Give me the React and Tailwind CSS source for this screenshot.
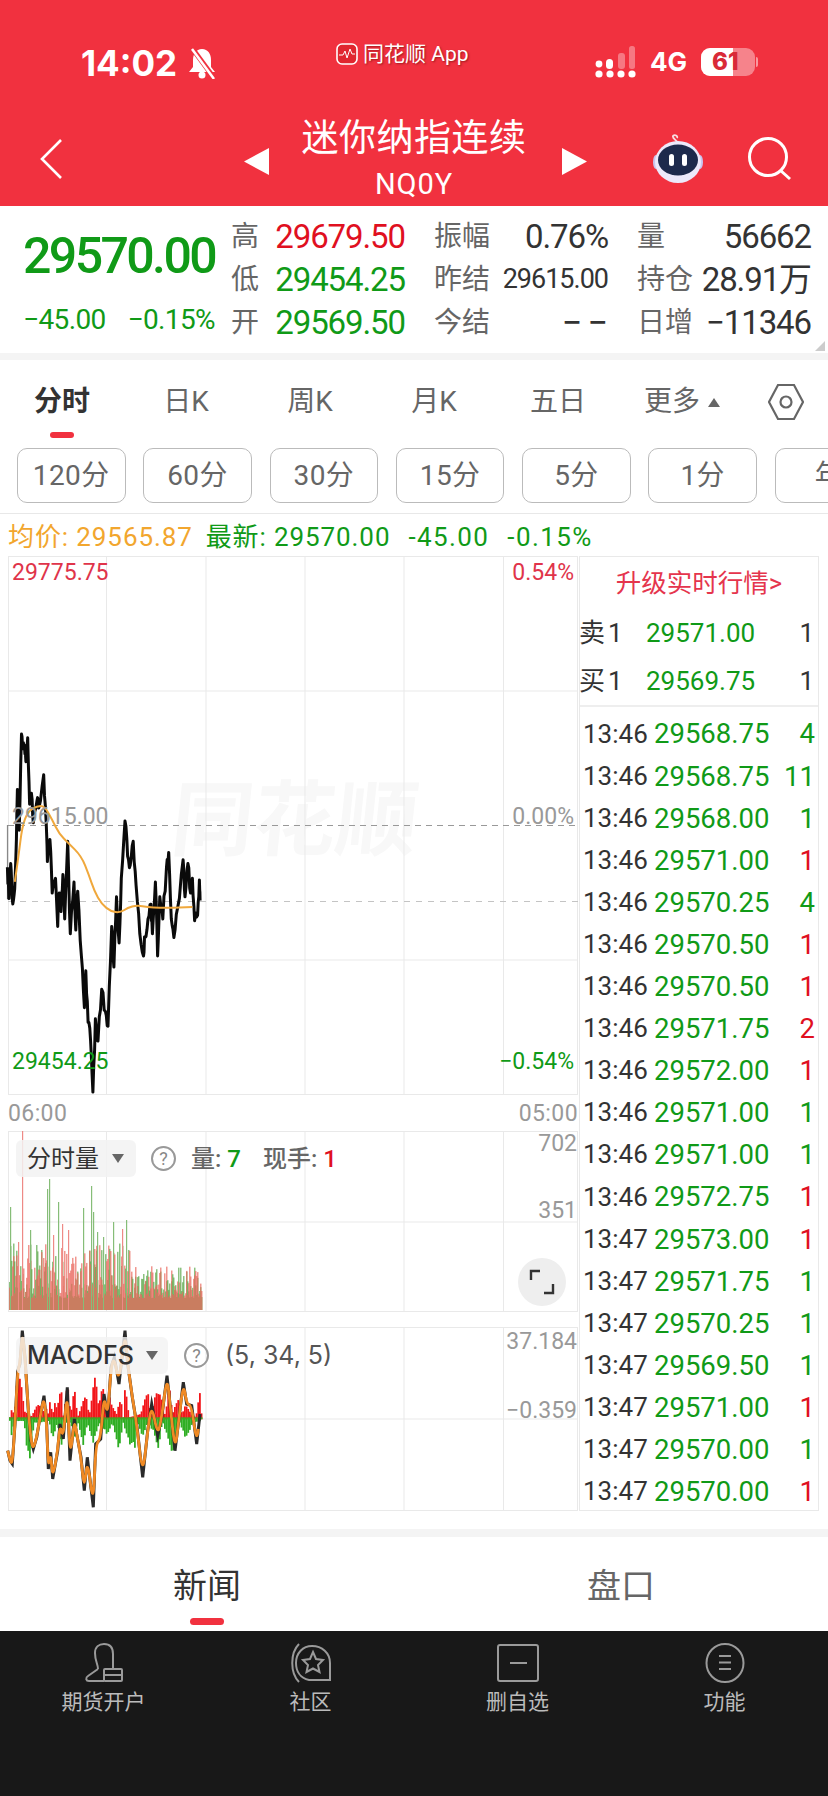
import React from 'react';

const GREEN = 'text-[#109a17]';
const RED = 'text-[#e0101f]';
const VX = [106.5, 206, 305, 404, 503.5];

// page px from zoomed trace coordinates
const mainTrace = [[20,860],[24,945],[29,850],[33,945],[38,935],[43,830],[47,650],[52,760],[58,500],[62,540],[66,530],[70,575],[75,510],[80,690],[85,660],[90,740],[100,680],[105,700],[118,610],[125,740],[128,845],[135,785],[141,930],[150,890],[156,1020],[160,930],[165,980],[170,880],[175,1000],[183,790],[190,1040],[200,900],[205,1030],[210,925],[220,1100],[228,1240],[232,1140],[238,1280],[245,1330],[251,1468],[258,1270],[265,1330],[275,1190],[285,1250],[292,1290],[302,1020],[308,1130],[315,940],[322,1065],[328,890],[338,735],[345,830],[352,855],[360,790],[368,910],[378,1040],[388,1100],[392,1050],[400,1000],[408,960],[412,1040],[420,900],[426,1100],[432,940],[440,1000],[450,860],[456,820],[463,1000],[470,1050],[480,970],[495,840],[500,940],[508,850],[515,930],[520,890],[526,1005],[534,990],[539,895],[541,950]];
const avgTrace = [[40,900],[50,830],[60,750],[75,710],[100,695],[120,695],[140,730],[160,770],[185,795],[220,830],[240,880],[255,925],[275,960],[300,980],[325,983],[345,970],[370,963],[400,968],[430,970],[470,970],[500,968],[540,968]];
const macdTrace = [[8,380],[15,410],[22,420],[30,300],[38,140],[45,120],[52,20],[60,100],[70,260],[78,350],[85,375],[95,340],[105,280],[117,215],[125,300],[130,435],[137,385],[143,465],[158,380],[165,300],[175,345],[187,190],[195,410],[208,285],[215,330],[228,400],[238,500],[247,400],[265,550],[272,360],[287,345],[297,210],[308,280],[318,130],[328,100],[342,180],[360,20],[368,120],[382,220],[395,300],[413,460],[428,320],[440,240],[458,335],[470,280],[486,155],[495,240],[510,380],[520,300],[535,175],[545,240],[560,245],[575,360],[585,270]];
const redEnv = [[12,280],[15,255],[25,270],[35,140],[45,170],[55,260],[75,280],[90,250],[100,235],[110,270],[118,225],[125,280],[133,230],[140,275],[147,240],[155,250],[165,180],[172,275],[185,180],[195,275],[205,190],[215,280],[240,210],[250,280],[268,145],[278,250],[290,180],[300,280],[310,210],[320,250],[332,270],[345,220],[352,280],[358,185],[370,280],[405,270],[425,200],[435,270],[450,210],[465,210],[478,275],[490,180],[500,270],[518,220],[528,270],[540,240],[555,270],[570,280],[582,205],[588,280]];
const greenEnv = [[12,285],[15,340],[25,285],[55,285],[60,345],[72,408],[85,290],[100,290],[130,285],[140,335],[155,290],[165,370],[175,290],[195,290],[205,340],[215,285],[232,355],[245,290],[262,350],[280,290],[305,325],[320,290],[340,370],[352,290],[370,350],[388,360],[395,290],[410,330],[425,290],[445,320],[458,370],[470,285],[500,385],[520,285],[540,340],[560,290],[585,285]];

const mainPts = mainTrace.map(([x, y]) => [x / 2.703, 550 + y / 2.703]);
const avgPts = avgTrace.map(([x, y]) => [x / 2.703, 550 + y / 2.703]);
const macdPts = macdTrace.map(([x, y]) => [5 + x / 3, 1325 + y / 3]);
const toStr = (pts) => pts.map((p) => p[0].toFixed(1) + ',' + p[1].toFixed(1)).join(' ');

const noise = (i) => {
  const s = Math.sin(i * 12.9898) * 43758.5453;
  return s - Math.floor(s);
};

// add small wiggles between traced points
function jag(pts, amp) {
  const out = [];
  pts.forEach((p, i) => {
    out.push(p);
    const n = pts[i + 1];
    if (!n) return;
    for (let k = 1; k < 3; k++) {
      const t = k / 3;
      out.push([p[0] + (n[0] - p[0]) * t, p[1] + (n[1] - p[1]) * t + (noise(i * 3 + k) - 0.5) * amp]);
    }
  });
  return out;
}

function smooth(pts) {
  let d = 'M' + pts[0][0] + ' ' + pts[0][1];
  for (let i = 1; i < pts.length - 1; i++) {
    const mx = (pts[i][0] + pts[i + 1][0]) / 2;
    const my = (pts[i][1] + pts[i + 1][1]) / 2;
    d += ' Q' + pts[i][0] + ' ' + pts[i][1] + ' ' + mx + ' ' + my;
  }
  return d;
}

function envAt(env, x) {
  for (let i = 0; i < env.length - 1; i++) {
    if (x >= env[i][0] && x <= env[i + 1][0]) {
      const t = (x - env[i][0]) / (env[i + 1][0] - env[i][0]);
      return env[i][1] + (env[i + 1][1] - env[i][1]) * t;
    }
  }
  return 280;
}

const spikes = { 22: [1132, 'r'], 49: [1180, 'g'], 47: [1190, 'g'], 58: [1203, 'g'], 91: [1187, 'g'], 83: [1209, 'g'], 93: [1213, 'g'], 10: [1208, 'g'], 113: [1223, 'g'], 126: [1221, 'g'], 30: [1231, 'g'], 62: [1225, 'r'], 68: [1231, 'r'], 122: [1230, 'r'], 53: [1236, 'r'], 18: [1243, 'r'], 97: [1233, 'g'], 103: [1238, 'g'] };

function VolumeBars() {
  const bars = [];
  for (let x = 9; x < 202; x++) {
    const env = x < 130 ? 55 : 32;
    const g = 12 + Math.pow(noise(x), 2) * env;
    const r = 12 + Math.pow(noise(x + 400), 2) * env;
    bars.push(<rect key={'g' + x} x={x} y={1311 - g} width="1.5" height={g} fill="#5ba84a" opacity="0.7" />);
    bars.push(<rect key={'r' + x} x={x} y={1311 - r} width="1.5" height={r} fill="#ea6a60" opacity="0.7" />);
    if (spikes[x]) {
      const [top, c] = spikes[x];
      bars.push(<rect key={'s' + x} x={x} y={top} width="1.2" height={1311 - top} fill={c === 'r' ? '#ee8a86' : '#86bd78'} />);
    }
  }
  return <g>{bars}</g>;
}

function MacdBars() {
  const bars = [];
  for (let zx = 12; zx < 588; zx += 5) {
    const x = 5 + zx / 3;
    const red = 280 - envAt(redEnv, zx);
    const grn = envAt(greenEnv, zx) - 280;
    const k = 0.88 + noise(zx) * 0.2;
    bars.push(<rect key={'r' + zx} x={x} y={1418.3 - (red * k) / 3} width="1.8" height={(red * k) / 3 + 2} fill="#f2161a" />);
    bars.push(<rect key={'g' + zx} x={x} y={1418.3} width="1.8" height={(grn * k) / 3 + 2} fill="#2fae24" />);
  }
  return <g>{bars}</g>;
}

function Grid({ x0 = 8, y0, w = 570, h, lines = [] }) {
  return (
    <g stroke="#e9e9e9" strokeWidth="1" fill="none">
      <rect x={x0 + 0.5} y={y0 + 0.5} width={w - 1} height={h - 1} />
      {VX.map((x) => <line key={x} x1={x} x2={x} y1={y0} y2={y0 + h} />)}
      {lines.map((y) => <line key={y} x1={x0} x2={x0 + w} y1={y} y2={y} />)}
    </g>
  );
}

function MainChart() {
  return (
    <div className="relative h-[539px]">
      <div className="absolute left-[164px] top-[225px] text-[82px] leading-[80px] font-bold text-[#f8f8f8] -skew-x-6">同花顺</div>
      <svg className="absolute inset-0 overflow-visible" width="570" height="539" viewBox="8 557 570 539">
        <Grid y0={557} h={539} lines={[692, 961]} />
        <line x1="8" x2="578" y1="826.5" y2="826.5" stroke="#999" strokeWidth="1.2" strokeDasharray="6 5" />
        <line x1="8" x2="578" y1="902.5" y2="902.5" stroke="#c4c4c4" strokeWidth="1" strokeDasharray="6 6" />
        <line x1="7.5" x2="7.5" y1="826" y2="900" stroke="#888" strokeWidth="1.2" />
        <polyline points={toStr(jag(mainPts, 14))} fill="none" stroke="#0a0a0a" strokeWidth="3" strokeLinejoin="round" />
        <path d={smooth(avgPts)} fill="none" stroke="#f0a83c" strokeWidth="2" />
      </svg>
      <span className="absolute left-[4px] top-[3px] text-[23px] leading-[28px] text-[#e0344a]">29775.75</span>
      <span className="absolute right-[4px] top-[3px] text-[23px] leading-[28px] text-[#e0344a]">0.54%</span>
      <span className="absolute left-[4px] top-[247px] text-[23px] leading-[28px] text-[#999]">29615.00</span>
      <span className="absolute right-[4px] top-[247px] text-[23px] leading-[28px] text-[#999]">0.00%</span>
      <span className="absolute left-[4px] top-[492px] text-[23px] leading-[28px] text-[#109a17]">29454.25</span>
      <span className="absolute right-[4px] top-[492px] text-[23px] leading-[28px] text-[#109a17]">−0.54%</span>
    </div>
  );
}

function HelpIcon() {
  return (
    <span className="flex h-[25px] w-[25px] items-center justify-center rounded-full border-2 border-[#999] text-[18px] leading-none text-[#888]">?</span>
  );
}

function VolumeChart() {
  return (
    <div className="relative h-[181px]">
      <svg className="absolute inset-0" width="570" height="181" viewBox="8 1132 570 181">
        <Grid y0={1132} h={181} lines={[1223]} />
        <VolumeBars />
      </svg>
      <div className="absolute left-[8px] top-[9px] flex items-center">
        <div className="flex h-[37px] w-[120px] items-center rounded-[6px] bg-[#f2f2f2]/85 pl-[11px] text-[24px] text-[#333]">
          分时量
          <svg className="ml-[13px]" width="12" height="9" viewBox="0 0 12 9"><path d="M0 0H12L6 9Z" fill="#666" /></svg>
        </div>
        <div className="ml-[15px]"><HelpIcon /></div>
        <span className="ml-[15px] text-[24px] font-medium text-[#666]">量: <span className={GREEN}>7</span></span>
        <span className="ml-[22px] text-[24px] font-medium text-[#666]">现手: <span className={RED}>1</span></span>
      </div>
      <span className="absolute right-[1px] top-[-1px] text-[23px] leading-[28px] text-[#999]">702</span>
      <span className="absolute right-[1px] top-[66px] text-[23px] leading-[28px] text-[#999]">351</span>
      <div className="absolute left-[510px] top-[127px] flex h-[48px] w-[48px] items-center justify-center rounded-full bg-[#eee]">
        <svg width="26" height="26" viewBox="0 0 26 26" fill="none" stroke="#333" strokeWidth="2.4"><path d="M2 11V2H11" /><path d="M24 15V24H15" /></svg>
      </div>
    </div>
  );
}

function MacdChart() {
  return (
    <div className="relative h-[184px]">
      <svg className="absolute inset-0 overflow-visible" width="570" height="184" viewBox="8 1328 570 184">
        <Grid y0={1328} h={184} lines={[1420]} />
        <MacdBars />
        <polyline points={toStr(macdPts)} fill="none" stroke="#2a2a2a" strokeWidth="3" strokeLinejoin="miter" strokeMiterlimit="6" />
        <path d={smooth(macdPts)} fill="none" stroke="#f08a24" strokeWidth="2.8" />
      </svg>
      <div className="absolute left-[8px] top-[10px] flex items-center">
        <div className="flex h-[37px] w-[152px] items-center rounded-[6px] bg-[#f2f2f2]/80 pl-[11px] font-['Inter',sans-serif] text-[25px] font-medium text-[#333]">
          MACDFS
          <svg className="ml-[12px]" width="12" height="9" viewBox="0 0 12 9"><path d="M0 0H12L6 9Z" fill="#666" /></svg>
        </div>
        <div className="ml-[16px]"><HelpIcon /></div>
        <span className="ml-[16px] font-['Inter',sans-serif] text-[25px] text-[#555]">(5, 34, 5)</span>
      </div>
      <span className="absolute right-[1px] top-[1px] text-[23px] leading-[28px] text-[#999]">37.184</span>
      <span className="absolute right-[1px] top-[70px] text-[23px] leading-[28px] text-[#999]">−0.359</span>
    </div>
  );
}

const trades = [
  ['13:46', '29568.75', '4', 'g'], ['13:46', '29568.75', '11', 'g'], ['13:46', '29568.00', '1', 'g'],
  ['13:46', '29571.00', '1', 'r'], ['13:46', '29570.25', '4', 'g'], ['13:46', '29570.50', '1', 'r'],
  ['13:46', '29570.50', '1', 'r'], ['13:46', '29571.75', '2', 'r'], ['13:46', '29572.00', '1', 'r'],
  ['13:46', '29571.00', '1', 'g'], ['13:46', '29571.00', '1', 'g'], ['13:46', '29572.75', '1', 'r'],
  ['13:47', '29573.00', '1', 'r'], ['13:47', '29571.75', '1', 'g'], ['13:47', '29570.25', '1', 'g'],
  ['13:47', '29569.50', '1', 'g'], ['13:47', '29571.00', '1', 'r'], ['13:47', '29570.00', '1', 'g'],
  ['13:47', '29570.00', '1', 'r'],
];

function SidePanel() {
  return (
    <div className="ml-px flex h-[955px] w-[240px] flex-col border border-[#e9e9e9]">
      <div className="flex h-[52px] shrink-0 items-center justify-center text-[25.5px] text-[#e5354d]">升级实时行情&gt;</div>
      {[['卖', '29571.00'], ['买', '29569.75']].map(([label, price]) => (
        <div key={label} className="flex h-[48px] shrink-0 items-center pr-[4px] text-[26px] text-[#333]">
          <span className="-ml-px w-[67px]">{label}<span className="ml-[3px]">1</span></span>
          <span className={'flex-1 ' + GREEN}>{price}</span>
          <span>1</span>
        </div>
      ))}
      <div className="h-[2px] shrink-0 bg-[#eee]" />
      <div className="flex flex-col pt-[6px]">
        {trades.map((t, i) => (
          <div key={i} className="grid h-[42.1px] grid-cols-[71px_114px_1fr] items-center pl-[3px] pr-[3px] text-[27.5px]">
            <span className="text-[26px] text-[#333]">{t[0]}</span>
            <span className={GREEN}>{t[1]}</span>
            <span className={'text-right ' + (t[3] === 'r' ? RED : GREEN)}>{t[2]}</span>
          </div>
        ))}
      </div>
    </div>
  );
}

function Quote({ label, value, className = '' }) {
  return (
    <div className="flex h-[43px] items-center justify-between">
      <span className="text-[28px] text-[#666]">{label}</span>
      <span className={className}>{value}</span>
    </div>
  );
}

function StatusBar() {
  return (
    <div className="flex h-[112px] items-start pl-[81px] pr-[70px] pt-[43px] text-white">
      <div className="flex w-[230px] items-center">
        <span className="font-['Inter',sans-serif] text-[35px] font-bold leading-[40px]">14:02</span>
        <svg className="ml-[10px]" width="30" height="32" viewBox="0 0 30 32">
          <path d="M15 2C9 2 6 7 6 13V20L2 25H28L24 20V13C24 7 21 2 15 2Z" fill="#fff" />
          <circle cx="15" cy="28" r="3.5" fill="#fff" />
          <line x1="5" y1="1" x2="27" y2="31" stroke="#f1313f" strokeWidth="5" />
          <line x1="5" y1="2" x2="27" y2="32" stroke="#fff" strokeWidth="2.5" />
        </svg>
      </div>
      <div className="mt-[-1px] ml-[25px] flex w-[136px] items-center">
        <svg width="22" height="22" viewBox="0 0 22 22" fill="none">
          <rect x="1" y="1" width="20" height="20" rx="5" stroke="#fff" strokeWidth="1.6" fill="#e0262f" />
          <path d="M3 12L7 12L9 8L11 15L14 6L16 11H19" stroke="#fff" strokeWidth="1" />
        </svg>
        <span className="ml-[5px] whitespace-nowrap text-[21px] leading-[24px] [text-shadow:1px_1px_2px_rgba(90,0,0,0.55)]">同花顺 App</span>
      </div>
      <div className="ml-auto mt-[3px] flex items-center">
        <svg width="42" height="32" viewBox="0 0 42 32" fill="#fff">
          <circle cx="4" cy="18" r="3.4" />
          <rect x="11" y="13" width="7" height="10" rx="3.5" />
          <rect x="23" y="7" width="7" height="16" rx="3" opacity="0.35" />
          <rect x="34" y="0" width="6" height="23" rx="2.5" opacity="0.35" />
          <circle cx="4" cy="28" r="3.6" />
          <circle cx="15" cy="28" r="3.6" />
          <circle cx="26" cy="28" r="3.6" />
          <circle cx="37" cy="28" r="3.6" />
        </svg>
        <span className="ml-[13px] font-['Inter',sans-serif] text-[26px] font-bold leading-[30px]">4G</span>
        <div className="relative ml-[14px] flex h-[28px] w-[54px] items-center overflow-hidden rounded-[9px] bg-white/40">
          <div className="h-full w-[32px] bg-white" />
          <span className="absolute left-[11px] top-0 font-['Inter',sans-serif] text-[24px] font-extrabold leading-[28px] text-[#d92a38]">61</span>
        </div>
        <div className="ml-[1px] h-[10px] w-[2px] rounded-r-full bg-white/50" />
      </div>
    </div>
  );
}

function TitleBar() {
  return (
    <div className="relative flex h-[94px] items-start justify-center text-white">
      <svg className="absolute left-[40px] top-[27px]" width="23" height="40" viewBox="0 0 23 40" fill="none">
        <path d="M21 1L2 20L21 39" stroke="#fff" strokeWidth="2.6" />
      </svg>
      <div className="ml-[3px] flex items-center">
        <svg className="mr-[32px] mt-[8px]" width="25" height="27" viewBox="0 0 25 27"><path d="M25 0V27L0 13.5Z" fill="#fff" /></svg>
        <div className="flex w-[226px] flex-col items-center pt-[3px]">
          <span className="whitespace-nowrap text-[37px] leading-[48px] tracking-[0.5px]">迷你纳指连续</span>
          <span className="mt-[3px] text-[29px] leading-[36px] tracking-[0.9px]">NQ0Y</span>
        </div>
        <svg className="ml-[35px] mt-[8px]" width="25" height="27" viewBox="0 0 25 27"><path d="M0 0V27L25 13.5Z" fill="#fff" /></svg>
      </div>
      <svg className="absolute left-[652px] top-[22px]" width="52" height="50" viewBox="0 0 52 50">
        <path d="M26 9C24 6 20 4 21 2C23 0 26 2 25 4" fill="none" stroke="#f7dce0" strokeWidth="1.8" />
        <ellipse cx="4" cy="28" rx="3" ry="7" fill="#c9c4ee" />
        <ellipse cx="48" cy="28" rx="3" ry="7" fill="#c9c4ee" />
        <ellipse cx="26" cy="28" rx="23" ry="21" fill="#ece9fb" />
        <ellipse cx="26" cy="26" rx="20" ry="15.5" fill="#1d2a4c" />
        <rect x="17" y="20" width="5" height="12" rx="2.5" fill="#fff" />
        <rect x="30" y="20" width="5" height="12" rx="2.5" fill="#fff" />
      </svg>
      <svg className="absolute left-[747px] top-[25px]" width="46" height="44" viewBox="0 0 46 44" fill="none" stroke="#fff" strokeWidth="3">
        <circle cx="21" cy="20" r="18.5" />
        <path d="M33 33L43 42" />
      </svg>
    </div>
  );
}

function QuoteBoard() {
  const big = 'text-[33px] leading-none tracking-[-1.1px]';
  return (
    <div className="relative flex h-[147px] bg-white">
      <div className="flex w-[231px] shrink-0 flex-col pl-[23px]">
        <span className={'mt-[22px] text-[50px] font-medium leading-[56px] tracking-[-2.6px] ' + GREEN}>29570.00</span>
        <div className={'mt-[19px] flex w-[192px] justify-between text-[28px] leading-[34px] tracking-[-0.6px] ' + GREEN}>
          <span>−45.00</span>
          <span>−0.15%</span>
        </div>
      </div>
      <div className="grid w-[580px] grid-cols-3 content-start gap-x-[29px] pt-[9px]">
        <Quote label="高" value="29679.50" className={big + ' ' + RED} />
        <Quote label="振幅" value="0.76%" className={big + ' text-[#333]'} />
        <Quote label="量" value="56662" className={big + ' text-[#333]'} />
        <Quote label="低" value="29454.25" className={big + ' ' + GREEN} />
        <Quote label="昨结" value="29615.00" className="text-[27px] leading-none tracking-[-1px] text-[#333]" />
        <Quote label="持仓" value="28.91万" className={big + ' text-[#333]'} />
        <Quote label="开" value="29569.50" className={big + ' ' + GREEN} />
        <Quote label="今结" value="−−" className="mr-[-5px] text-[36px] leading-none tracking-[5px] text-[#333]" />
        <Quote label="日增" value="−11346" className={big + ' text-[#333]'} />
      </div>
      <svg className="absolute right-[3px] bottom-[2px]" width="10" height="10" viewBox="0 0 10 10"><path d="M10 0V10H0Z" fill="#ccc" /></svg>
    </div>
  );
}

const tabs = ['分时', '日K', '周K', '月K', '五日'];
const periods = ['120分', '60分', '30分', '15分', '5分', '1分', '年'];

function PeriodTabs() {
  return (
    <div className="h-[154px] border-b border-[#e8e8e8]">
      <div className="flex h-[88px] pt-[22px]">
        {tabs.map((t, i) => (
          <div key={t} className="flex w-[124px] flex-col items-center">
            <span className={i === 0 ? 'text-[28px] font-semibold leading-[40px] text-[#333]' : 'text-[28px] leading-[40px] text-[#666]'}>{t}</span>
            {i === 0 && <div className="mt-[10px] h-[6px] w-[24px] rounded-full bg-[#f1313f]" />}
          </div>
        ))}
        <div className="flex w-[124px] items-start justify-center">
          <span className="text-[28px] leading-[40px] text-[#666]">更多</span>
          <svg className="ml-[8px] mt-[16px]" width="12" height="9" viewBox="0 0 12 9"><path d="M6 0L12 9H0Z" fill="#666" /></svg>
        </div>
        <div className="flex flex-1 justify-center">
          <svg width="36" height="40" viewBox="0 0 36 40" fill="none" stroke="#666" strokeWidth="2.2">
            <path d="M10 3H26L35 20L26 37H10L1 20Z" />
            <circle cx="18" cy="20" r="5.5" />
          </svg>
        </div>
      </div>
      <div className="flex gap-[17.8px] overflow-hidden pl-[17px]">
        {periods.map((p) => (
          <div key={p} className="flex h-[55px] w-[108.5px] shrink-0 items-center justify-center rounded-[10px] border border-[#bbb] text-[28px] tracking-[0.4px] text-[#666]">{p}</div>
        ))}
      </div>
    </div>
  );
}

function InfoLine() {
  return (
    <div className="flex h-[42px] items-center whitespace-nowrap pl-[8px] pt-[4px] text-[26px] tracking-[0.9px]">
      <span className="text-[#f2a62e]">均价: 29565.87</span>
      <span className={'ml-[13px] ' + GREEN}>最新: 29570.00</span>
      <span className={'ml-[18px] tracking-[1.4px] ' + GREEN}>-45.00</span>
      <span className={'ml-[18px] tracking-[1.4px] ' + GREEN}>-0.15%</span>
    </div>
  );
}

const navItems = [
  {
    label: '期货开户',
    icon: (
      <svg width="40" height="40" viewBox="0 0 40 40" fill="none" stroke="#9a9a9a" strokeWidth="2">
        <path d="M14 26C14 21 11 18 11 10C11 4 15 1 20 1C26 1 29 5 29 11V25" />
        <path d="M14 26L4 33C1 35 2 38 5 38H20" />
        <rect x="20" y="26" width="18" height="12" rx="1" />
        <path d="M20 32H38" />
      </svg>
    ),
  },
  {
    label: '社区',
    icon: (
      <svg width="44" height="40" viewBox="0 0 44 40" fill="none" stroke="#9a9a9a" strokeWidth="2">
        <path d="M10 1C1 10 1 30 10 39" />
        <path d="M20 37C11 35 7 28 7 20C7 10 14 3 23 3C33 3 41 10 41 20V37Z" />
        <path d="M24 9L27 16L34 17L29 22L30.5 29L24 25.5L17.5 29L19 22L14 17L21 16Z" />
      </svg>
    ),
  },
  {
    label: '删自选',
    icon: (
      <svg width="42" height="40" viewBox="0 0 42 40" fill="none" stroke="#9a9a9a" strokeWidth="2">
        <rect x="1" y="2" width="40" height="36" rx="2" />
        <path d="M13 20H30" />
      </svg>
    ),
  },
  {
    label: '功能',
    icon: (
      <svg width="40" height="40" viewBox="0 0 40 40" fill="none" stroke="#9a9a9a" strokeWidth="2">
        <ellipse cx="20" cy="20" rx="18.5" ry="19" />
        <path d="M14 13H26M14 19.5H26M14 26H26" />
      </svg>
    ),
  },
];

export default function App() {
  return (
    <div className="flex h-[1796px] w-[828px] flex-col overflow-hidden bg-white font-[Roboto,'Noto_Sans_CJK_SC',sans-serif]">
      {/* Header */}
      <div className="bg-[#f1313f]">
        <StatusBar />
        <TitleBar />
      </div>

      <QuoteBoard />
      <div className="h-[7px] bg-[#f4f4f4]" />

      <PeriodTabs />
      <InfoLine />

      {/* Charts */}
      <div className="flex pl-[8px]">
        <div className="flex w-[570px] flex-col">
          <MainChart />
          <div className="flex h-[36px] items-center justify-between pt-[2px] text-[23px] tracking-[0.4px] text-[#999]">
            <span>06:00</span>
            <span>05:00</span>
          </div>
          <VolumeChart />
          <div className="h-[15px]" />
          <MacdChart />
        </div>
        <SidePanel />
      </div>

      <div className="mt-[18px] h-[8px] bg-[#f4f4f4]" />

      {/* News tabs */}
      <div className="grid h-[94px] grid-cols-2">
        <div className="flex flex-col items-center pt-[26px]">
          <span className="text-[34px] leading-[46px] text-[#333]">新闻</span>
          <div className="mt-[9px] h-[7px] w-[34px] rounded-full bg-[#f1313f]" />
        </div>
        <div className="flex flex-col items-center pt-[26px]">
          <span className="text-[34px] leading-[46px] text-[#666]">盘口</span>
        </div>
      </div>

      {/* Bottom nav */}
      <div className="grid flex-1 grid-cols-4 items-start bg-[#181818] pt-[12px]">
        {navItems.map((n) => (
          <div key={n.label} className="flex flex-col items-center">
            {n.icon}
            <span className="mt-[5px] text-[21px] leading-[28px] text-[#bbb]">{n.label}</span>
          </div>
        ))}
      </div>
    </div>
  );
}
